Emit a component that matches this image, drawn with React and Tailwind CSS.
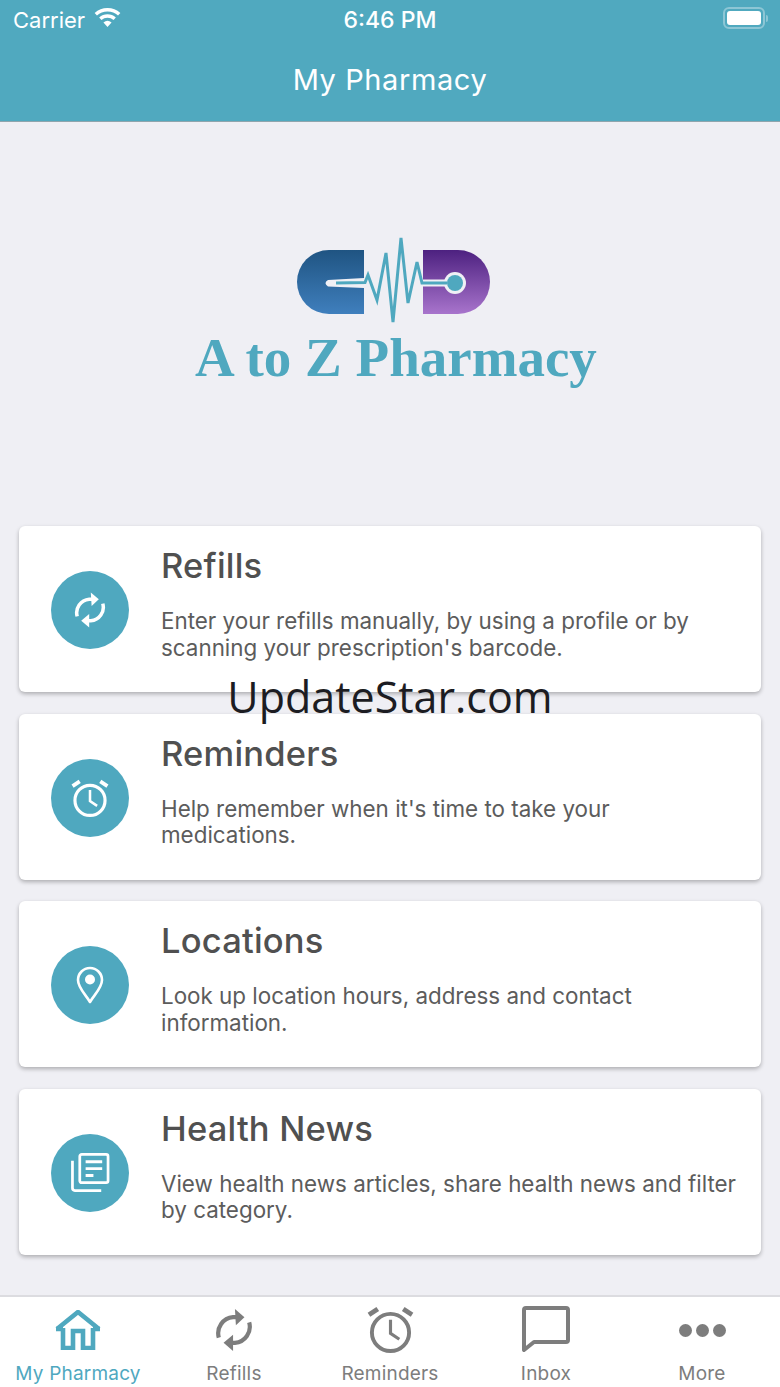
import React from "react";

const RefreshIcon = ({ className }) => (
  <svg viewBox="0 0 40 44" className={className} fill="none" stroke="currentColor" strokeWidth="4.4">
    <path d="M4 30 A 17 17 0 0 1 19 8.5 L 23 8.5" />
    <path d="M36 14 A 17 17 0 0 1 21 35.5 L 17 35.5" />
    <path d="M21 0 L 31 8.5 L 22 17 Z" fill="currentColor" stroke="none" />
    <path d="M19 27 L 9 35.5 L 19 44 Z" fill="currentColor" stroke="none" />
  </svg>
);

const AlarmIcon = ({ className, hand = 4 }) => (
  <svg viewBox="0 0 48 48" className={className} fill="none" stroke="currentColor" strokeWidth={hand}>
    <circle cx="24" cy="27" r="19" />
    <path d="M24 14 V 28 L 33 34" strokeWidth={hand * 0.8} />
    <path d="M2 9 L 11 3" strokeWidth={hand * 1.2} />
    <path d="M46 9 L 37 3" strokeWidth={hand * 1.2} />
  </svg>
);

const PinIcon = ({ className }) => (
  <svg viewBox="0 0 28 38" className={className} fill="none" stroke="currentColor" strokeWidth="2.6">
    <path d="M14 36 C 10 29 2 22 2 14 A 12 12 0 0 1 26 14 C 26 22 18 29 14 36 Z" strokeLinejoin="round" />
    <circle cx="14" cy="13.5" r="5" fill="currentColor" stroke="none" />
  </svg>
);

const NewsIcon = ({ className }) => (
  <svg viewBox="0 0 40 40" className={className} fill="none" stroke="currentColor" strokeWidth="2.8">
    <rect x="9" y="1.5" width="29" height="29" rx="2" />
    <path d="M1.5 8 V 36 A 2.5 2.5 0 0 0 4 38.500 H 31" />
    <path d="M15 9 H 32 M 15 16 H 32 M 15 23 H 23" strokeWidth="3" />
  </svg>
);

const HomeIcon = ({ className }) => (
  <svg viewBox="0 0 46 40" className={className} fill="none" stroke="currentColor" strokeWidth="4.600">
    <path d="M1 19 H 8 M 38 19 H 45" />
    <path d="M2 19 L 23 2 L 44 19" strokeLinejoin="miter" />
    <path d="M8 18 V 38 H 18 V 21 H 28 V 38 H 38 V 18" />
  </svg>
);

const ChatIcon = ({ className }) => (
  <svg viewBox="0 0 48 48" className={className} fill="none" stroke="currentColor" strokeWidth="4">
    <path d="M4 2 H 44 A 2 2 0 0 1 46 4 V 34 A 2 2 0 0 1 44 36 H 12 L 2 44 V 4 A 2 2 0 0 1 4 2 Z" strokeLinejoin="round" />
  </svg>
);

// viewBox uses the page's own coordinates, easier to line up against the screenshot
const Logo = () => (
  <div className="flex flex-col items-center">
    <svg viewBox="290 235 210 90" className="w-[210px] h-[90px] ml-[10px]">
      <defs>
        <linearGradient id="pillBlue" x1="0" y1="0" x2="0" y2="1">
          <stop offset="0" stopColor="#1f5482" />
          <stop offset="1" stopColor="#3f7fbd" />
        </linearGradient>
        <linearGradient id="pillPurple" x1="0" y1="0" x2="0" y2="1">
          <stop offset="0" stopColor="#4d2180" />
          <stop offset="1" stopColor="#a874cc" />
        </linearGradient>
      </defs>
      <path d="M364 250 H 329 A 32 32 0 0 0 329 314 H 364 Z" fill="url(#pillBlue)" />
      <path d="M423 250 H 458 A 32 32 0 0 1 458 314 H 423 Z" fill="url(#pillPurple)" />
      <path d="M328 280 L 364 278 V 288 L 328 286.500 Q 323 283 328 280 Z" fill="#f0f0f5" />
      <path d="M423 279.500 H 447 V 286.500 H 423 Z" fill="#f0f0f5" />
      <circle cx="455" cy="283" r="11" fill="#f0f0f5" />
      <circle cx="455" cy="283" r="8" fill="#4fa8bf" />
      <path d="M336 283 L 365 282.500 L 368 275 L 377 300 L 386 253 L 393 322 L 401 238 L 408 303 L 417 262 L 422 283 H 447" fill="none" stroke="#4fa8bf" strokeWidth="3" strokeLinejoin="miter" />
    </svg>
    <div className="mt-[2px] text-[#4fa8bf] text-[55px] leading-[62px] font-bold whitespace-nowrap font-['Liberation_Serif',serif] ml-[12px]">
      A to Z Pharmacy
    </div>
  </div>
);

const cards = [
  {
    title: "Refills",
    text: ["Enter your refills manually, by using a profile or by", "scanning your prescription's barcode."],
    icon: <RefreshIcon className="w-[32px] h-[42px]" />,
  },
  {
    title: "Reminders",
    text: ["Help remember when it's time to take your", "medications."],
    icon: <AlarmIcon className="w-[38px] h-[38px]" />,
  },
  {
    title: "Locations",
    text: ["Look up location hours, address and contact", "information."],
    icon: <PinIcon className="w-[28px] h-[38px]" />,
  },
  {
    title: "Health News",
    text: ["View health news articles, share health news and filter", "by category."],
    icon: <NewsIcon className="w-[39px] h-[39px]" />,
  },
];

const tabs = [
  { label: "My Pharmacy", active: true, icon: <HomeIcon className="w-[46px] h-[40px]" /> },
  { label: "Refills", icon: <RefreshIcon className="w-[38px] h-[50px]" /> },
  { label: "Reminders", icon: <AlarmIcon className="w-[47px] h-[47px]" /> },
  { label: "Inbox", icon: <ChatIcon className="w-[48px] h-[48px]" /> },
  {
    label: "More",
    icon: (
      <div className="flex gap-[4px] mt-[1px]">
        <span className="w-[13px] h-[13px] rounded-full bg-current" />
        <span className="w-[13px] h-[13px] rounded-full bg-current" />
        <span className="w-[13px] h-[13px] rounded-full bg-current" />
      </div>
    ),
  },
];

const Card = ({ title, text, icon }) => (
  <div className="h-[166px] bg-white rounded-[6px] shadow-[0_2px_4px_rgba(0,0,0,0.28)] flex items-center pl-[32px] pr-[20px]">
    <div className="w-[78px] h-[78px] mt-[2px] rounded-full bg-[#4fa8bf] text-white flex items-center justify-center shrink-0">
      {icon}
    </div>
    <div className="ml-[32px] h-full pt-[17px]">
      <div className="text-[34.500px] leading-[46px] font-medium tracking-[0.2px] text-[#505050]">{title}</div>
      <div className="mt-[19px] text-[22.400px] leading-[26.500px] text-[#5c5c5c]">
        {text.map((line) => (
          <div key={line} className="whitespace-nowrap">{line}</div>
        ))}
      </div>
    </div>
  </div>
);

export default function App() {
  return (
    <div className="relative w-[780px] h-[1387px] flex flex-col bg-[#efeff4] overflow-hidden font-['Inter',sans-serif]">
      {/* header */}
      <div className="h-[122px] bg-[#50a9bf] border-b border-[#8fa5ad] text-white shrink-0">
        <div className="h-[40px] px-[13px] flex items-center justify-between relative">
          <div className="flex items-center gap-[9px]">
            <span className="text-[22px] leading-none">Carrier</span>
            <svg viewBox="0 0 30 24" className="w-[27px] h-[22px] mt-[-6px]" fill="none" stroke="currentColor" strokeWidth="3.800">
              <path d="M2 9 A 19 19 0 0 1 28 9" />
              <path d="M7 14 A 12 12 0 0 1 23 14" />
              <path d="M15 23 L 10.500 18 A 7 7 0 0 1 19.500 18 Z" fill="currentColor" stroke="none" />
            </svg>
          </div>
          <span className="absolute left-0 right-0 text-center text-[23px] leading-none font-medium">6:46 PM</span>
          <div className="flex items-center mr-[-1px] mt-[-4px]">
            <div className="w-[42px] h-[22px] rounded-[6px] border-2 border-[#8dc6d5] p-[2px]">
              <div className="w-full h-full bg-white rounded-[3px]" />
            </div>
            <div className="w-[2px] h-[7px] bg-[#8dc6d5] rounded-r ml-[1px]" />
          </div>
        </div>
        <div className="text-center text-[29px] leading-[40px] mt-[20px] tracking-[0.6px]">My Pharmacy</div>
      </div>

      {/* logo */}
      <div className="h-[404px] shrink-0 flex justify-center pt-[113px]">
        <Logo />
      </div>

      {/* cards */}
      <div className="px-[19px] flex flex-col gap-[21.500px]">
        {cards.map((c) => (
          <Card key={c.title} {...c} />
        ))}
      </div>

      {/* tab bar */}
      <div className="mt-auto h-[92px] bg-white border-t-2 border-[#dcdce0] flex shrink-0 text-[#7d7d7d]">
        {tabs.map((t) => (
          <div key={t.label} className={`flex-1 flex flex-col items-center ${t.active ? "text-[#4fa8bf]" : ""}`}>
            <div className="h-[65px] flex items-center justify-center">{t.icon}</div>
            <div className="text-[19px] leading-[24px] tracking-[0.2px]">{t.label}</div>
          </div>
        ))}
      </div>

      {/* watermark */}
      <div className="absolute left-0 right-0 top-[670px] text-center text-[43px] leading-[54px] text-[#1c1c22] font-['Open_Sans',sans-serif]">
        UpdateStar.com
      </div>
    </div>
  );
}
